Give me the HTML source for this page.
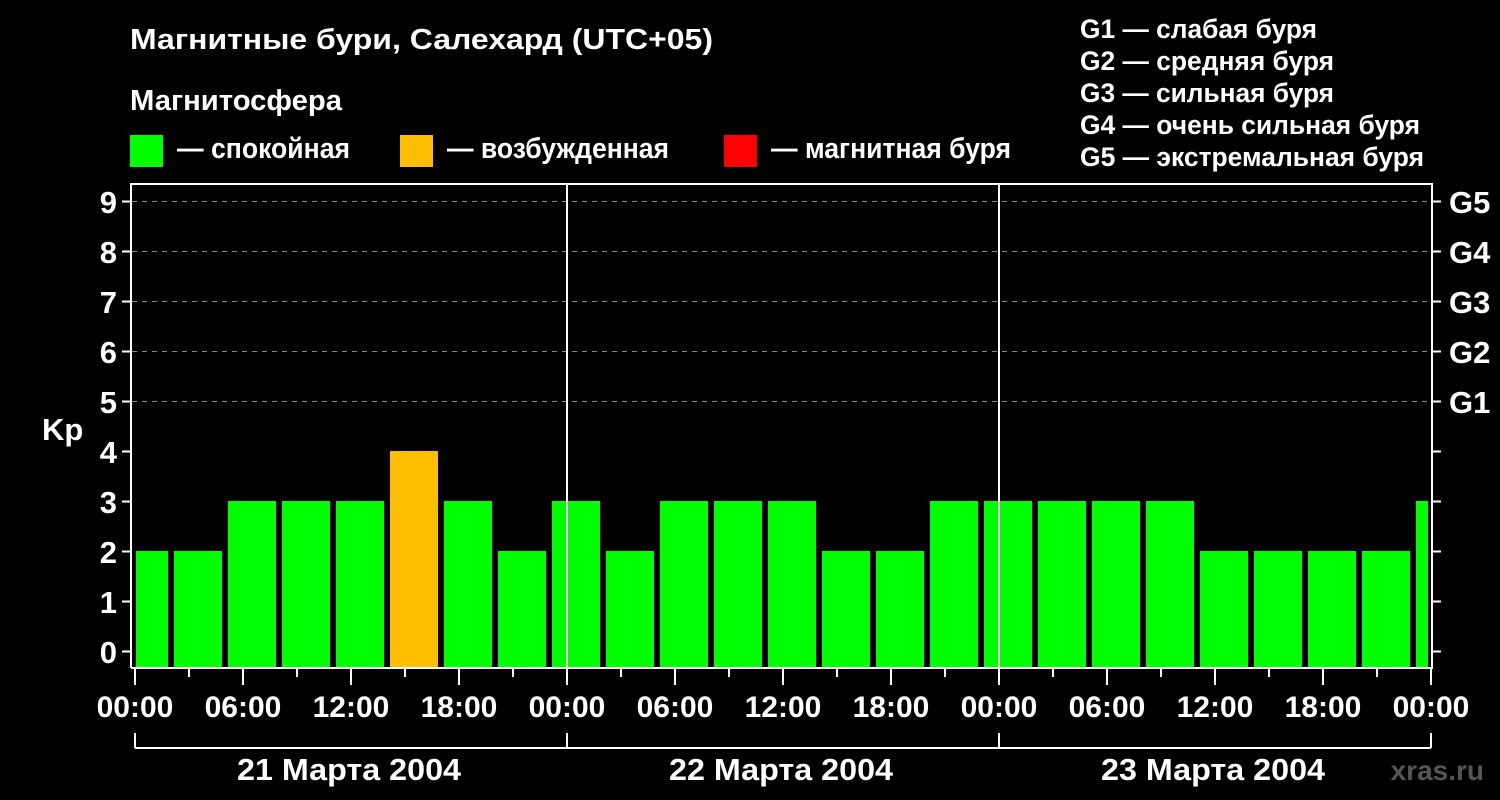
<!DOCTYPE html>
<html><head><meta charset="utf-8"><style>
html,body{margin:0;padding:0;background:#000;}
svg{display:block;font-family:"Liberation Sans",sans-serif;font-weight:bold;}
</style></head><body>
<svg width="1500" height="800" viewBox="0 0 1500 800" xmlns="http://www.w3.org/2000/svg">
<rect width="1500" height="800" fill="#000"/>
<g fill="#fff">
<text x="130" y="49" font-size="29" textLength="583" lengthAdjust="spacingAndGlyphs">Магнитные бури, Салехард (UTC+05)</text>
<text x="130" y="110" font-size="29" textLength="212" lengthAdjust="spacingAndGlyphs">Магнитосфера</text>
<text x="177" y="158" font-size="29" textLength="173" lengthAdjust="spacingAndGlyphs">— спокойная</text>
<text x="447" y="158" font-size="29" textLength="222" lengthAdjust="spacingAndGlyphs">— возбужденная</text>
<text x="771" y="158" font-size="29" textLength="240" lengthAdjust="spacingAndGlyphs">— магнитная буря</text>
<g font-size="27">
<text x="1080" y="38" textLength="237" lengthAdjust="spacingAndGlyphs">G1 — слабая буря</text>
<text x="1080" y="70" textLength="254" lengthAdjust="spacingAndGlyphs">G2 — средняя буря</text>
<text x="1080" y="102" textLength="254" lengthAdjust="spacingAndGlyphs">G3 — сильная буря</text>
<text x="1080" y="134" textLength="340" lengthAdjust="spacingAndGlyphs">G4 — очень сильная буря</text>
<text x="1080" y="166" textLength="344" lengthAdjust="spacingAndGlyphs">G5 — экстремальная буря</text>
</g>
</g>
<rect x="130" y="135" width="33" height="32" fill="#00ff00"/>
<rect x="400" y="135" width="33" height="32" fill="#ffbf00"/>
<rect x="724" y="135" width="33" height="32" fill="#ff0000"/>

<g stroke="#888" stroke-width="1" stroke-dasharray="5,5">
<line x1="132" y1="201.5" x2="1432" y2="201.5"/>
<line x1="132" y1="251.5" x2="1432" y2="251.5"/>
<line x1="132" y1="301.5" x2="1432" y2="301.5"/>
<line x1="132" y1="351.5" x2="1432" y2="351.5"/>
<line x1="132" y1="401.5" x2="1432" y2="401.5"/>
</g>

<g fill="#00ff00">
<rect x="136" y="551" width="32" height="117"/>
<rect x="174" y="551" width="48" height="117"/>
<rect x="228" y="501" width="48" height="167"/>
<rect x="282" y="501" width="48" height="167"/>
<rect x="336" y="501" width="48" height="167"/>
<rect x="444" y="501" width="48" height="167"/>
<rect x="498" y="551" width="48" height="117"/>
<rect x="552" y="501" width="48" height="167"/>
<rect x="606" y="551" width="48" height="117"/>
<rect x="660" y="501" width="48" height="167"/>
<rect x="714" y="501" width="48" height="167"/>
<rect x="768" y="501" width="48" height="167"/>
<rect x="822" y="551" width="48" height="117"/>
<rect x="876" y="551" width="48" height="117"/>
<rect x="930" y="501" width="48" height="167"/>
<rect x="984" y="501" width="48" height="167"/>
<rect x="1038" y="501" width="48" height="167"/>
<rect x="1092" y="501" width="48" height="167"/>
<rect x="1146" y="501" width="48" height="167"/>
<rect x="1200" y="551" width="48" height="117"/>
<rect x="1254" y="551" width="48" height="117"/>
<rect x="1308" y="551" width="48" height="117"/>
<rect x="1362" y="551" width="48" height="117"/>
<rect x="1416" y="501" width="12" height="167"/>
</g>
<rect x="390" y="451" width="48" height="217" fill="#ffbf00"/>

<g stroke="#fff" stroke-width="2" fill="none">
<polyline points="131,668 131,184 1432,184 1432,668 131,668"/>
<line x1="567" y1="184" x2="567" y2="668"/>
<line x1="999" y1="184" x2="999" y2="668"/>
<path d="M122 201.5h9M122 251.5h9M122 301.5h9M122 351.5h9M122 401.5h9M122 451.5h9M122 501.5h9M122 551.5h9M122 601.5h9M122 651.5h9"/>
<path d="M1432 201.5h9M1432 251.5h9M1432 301.5h9M1432 351.5h9M1432 401.5h9M1432 451.5h9M1432 501.5h9M1432 551.5h9M1432 601.5h9M1432 651.5h9"/>
<path d="M135 668v17M243 668v17M351 668v17M459 668v17M567 668v17M675 668v17M783 668v17M891 668v17M999 668v17M1107 668v17M1215 668v17M1323 668v17M1431 668v17"/>
<path d="M189 668v9M297 668v9M405 668v9M513 668v9M621 668v9M729 668v9M837 668v9M945 668v9M1053 668v9M1161 668v9M1269 668v9M1377 668v9"/>
<path d="M135 733v15M567 733v15M999 733v15M1431 733v15M135 748H1431"/>
</g>

<g fill="#fff" font-size="31">
<g text-anchor="end">
<text x="117" y="213">9</text><text x="117" y="263">8</text><text x="117" y="313">7</text>
<text x="117" y="363">6</text><text x="117" y="413">5</text><text x="117" y="463">4</text>
<text x="117" y="513">3</text><text x="117" y="563">2</text><text x="117" y="613">1</text>
<text x="117" y="663">0</text>
</g>
<text x="42" y="440">Kp</text>
<text x="1449" y="213">G5</text><text x="1449" y="263">G4</text><text x="1449" y="313">G3</text>
<text x="1449" y="363">G2</text><text x="1449" y="413">G1</text>
<g text-anchor="middle" font-size="30">
<text x="135" y="717">00:00</text><text x="243" y="717">06:00</text><text x="351" y="717">12:00</text>
<text x="459" y="717">18:00</text><text x="567" y="717">00:00</text><text x="675" y="717">06:00</text>
<text x="783" y="717">12:00</text><text x="891" y="717">18:00</text><text x="999" y="717">00:00</text>
<text x="1107" y="717">06:00</text><text x="1215" y="717">12:00</text><text x="1323" y="717">18:00</text>
<text x="1431" y="717">00:00</text>
</g>
<g text-anchor="middle" font-size="31">
<text x="349" y="780" textLength="224" lengthAdjust="spacingAndGlyphs">21 Марта 2004</text>
<text x="781" y="780" textLength="224" lengthAdjust="spacingAndGlyphs">22 Марта 2004</text>
<text x="1213" y="780" textLength="224" lengthAdjust="spacingAndGlyphs">23 Марта 2004</text>
</g>
</g>
<text x="1484" y="780" text-anchor="end" font-size="28" fill="#555">xras.ru</text>
</svg>
</body></html>
